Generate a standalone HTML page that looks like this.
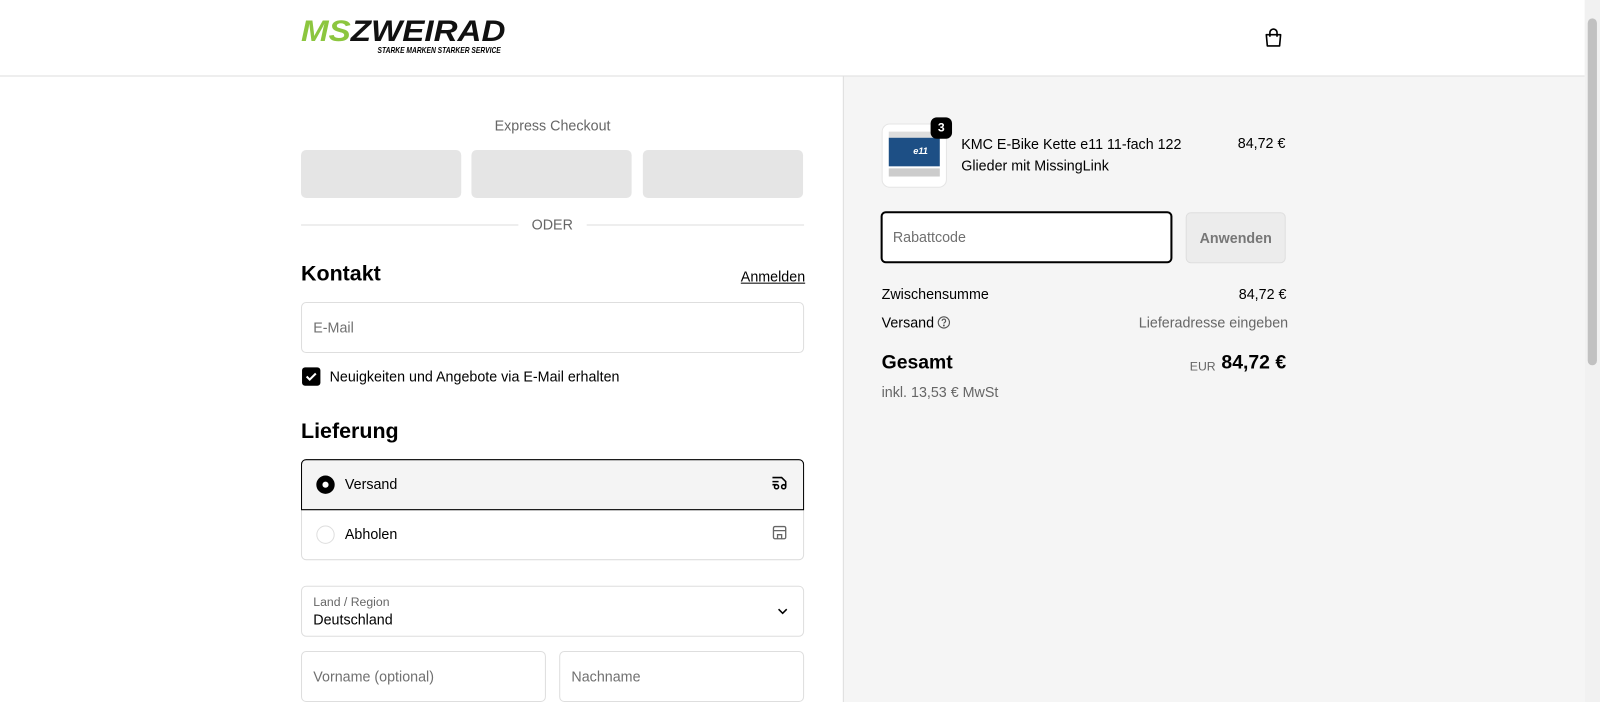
<!DOCTYPE html>
<html><head><meta charset="utf-8"><style>
*{box-sizing:border-box;margin:0;padding:0}
html,body{width:1600px;height:688px;overflow:hidden}
body{font-family:"Liberation Sans",Arial,sans-serif;color:#000;background:#fff;font-size:14px}
#w{position:absolute;left:0;top:0;width:1568px;height:674px;transform:scale(1.0204);transform-origin:0 0}
.abs{position:absolute}
.hdr{left:0;top:0;width:1553px;height:75px;border-bottom:1px solid #dedede;background:#fff}
.right{left:826px;top:75px;width:727px;height:613px;background:#f5f5f5;border-left:1px solid #dedede}
.sb{left:1553px;top:0;width:15px;height:688px;background:#f1f1f1}
.inp{border:1px solid #dedede;border-radius:5px;background:#fff}
.ph{color:#707070;font-size:14px}
.xb{background:#e5e5e5;border-radius:5px;height:47px;top:147px;width:157px}
</style></head><body><div id="w">
<div class="abs hdr"></div>
<div class="abs" style="left:295px;top:16px;font-style:italic;font-weight:900;font-size:29px;letter-spacing:0px;line-height:30px;transform:scaleX(1.12);transform-origin:0 0"><span style="color:#8cc63f">MS</span><span style="color:#111">ZWEIRAD</span></div>
<div class="abs" style="left:370px;top:45px;font-size:8px;font-weight:bold;font-style:italic;white-space:nowrap;transform:scaleX(0.82);transform-origin:0 0">STARKE MARKEN STARKER SERVICE</div>
<svg class="abs" style="left:1237px;top:26px" width="22" height="22" viewBox="0 0 22 22" fill="none" stroke="#000" stroke-width="1.6"><path d="M4 8h14l-1 11H5z" stroke-linejoin="round"/><path d="M7.5 10V6a3.5 3.5 0 0 1 7 0v4"/></svg>
<div class="abs right"></div>
<div class="abs sb"><div class="abs" style="left:3px;top:18px;width:9px;height:340px;background:#c1c1c1;border-radius:5px"></div></div>

<div class="abs" style="left:295px;top:115px;width:493px;text-align:center;color:#666">Express Checkout</div>
<div class="abs xb" style="left:295px"></div><div class="abs xb" style="left:462px"></div><div class="abs xb" style="left:630px"></div>
<div class="abs" style="left:295px;top:220px;width:213px;border-top:1px solid #dedede"></div>
<div class="abs" style="left:575px;top:220px;width:213px;border-top:1px solid #dedede"></div>
<div class="abs" style="left:521px;top:212px;color:#666">ODER</div>
<div class="abs" style="left:295px;top:257px;font-size:21px;font-weight:bold">Kontakt</div>
<div class="abs" style="left:726px;top:263px;text-decoration:underline">Anmelden</div>
<div class="abs inp" style="left:295px;top:296px;width:493px;height:50px"></div>
<div class="abs ph" style="left:307px;top:313px">E-Mail</div>
<div class="abs" style="left:296px;top:360px;width:18px;height:18px;background:#000;border-radius:3px"><svg width="18" height="18"><path d="M4.5 9l3 3 6-6" stroke="#fff" stroke-width="2" fill="none"/></svg></div>
<div class="abs" style="left:323px;top:361px">Neuigkeiten und Angebote via E-Mail erhalten</div>
<div class="abs" style="left:295px;top:411px;font-size:21px;font-weight:bold">Lieferung</div>
<div class="abs" style="left:295px;top:450px;width:493px;height:99px;border:1px solid #dedede;border-radius:5px"></div>
<div class="abs" style="left:295px;top:450px;width:493px;height:50px;border:1px solid #000;border-radius:5px 5px 0 0;background:#f4f4f4"></div>
<div class="abs" style="left:310px;top:466px;width:18px;height:18px;border-radius:50%;background:#000"><div class="abs" style="left:6px;top:6px;width:6px;height:6px;border-radius:50%;background:#fff"></div></div>
<div class="abs" style="left:338px;top:466px">Versand</div>
<svg class="abs" style="left:755px;top:464px" width="20" height="18" viewBox="0 0 20 18" fill="none" stroke="#000" stroke-width="1.5"><path d="M2 4h9l4 4v4h-1M2 8h6M2 11h4"/><circle cx="6" cy="13" r="2"/><circle cx="13" cy="13" r="2"/></svg>
<div class="abs" style="left:310px;top:515px;width:18px;height:18px;border-radius:50%;border:1px solid #dedede"></div>
<div class="abs" style="left:338px;top:515px">Abholen</div>
<svg class="abs" style="left:756px;top:514px" width="16" height="16" viewBox="0 0 16 16" fill="none" stroke="#666" stroke-width="1.3"><rect x="2" y="2" width="12" height="12" rx="1.5"/><path d="M2 6h12M6 14v-4h4v4"/></svg>
<div class="abs inp" style="left:295px;top:574px;width:493px;height:50px"></div>
<div class="abs" style="left:307px;top:583px;font-size:12px;color:#666">Land / Region</div>
<div class="abs" style="left:307px;top:599px">Deutschland</div>
<svg class="abs" style="left:761px;top:594px" width="12" height="10"><path d="M2 3l4 4 4-4" stroke="#000" stroke-width="1.5" fill="none"/></svg>
<div class="abs inp" style="left:295px;top:638px;width:240px;height:50px"></div>
<div class="abs ph" style="left:307px;top:655px">Vorname (optional)</div>
<div class="abs inp" style="left:548px;top:638px;width:240px;height:50px"></div>
<div class="abs ph" style="left:560px;top:655px">Nachname</div>

<div class="abs" style="left:864px;top:121px;width:64px;height:63px;background:#fff;border:1px solid #e5e5e5;border-radius:8px"><div class="abs" style="left:6px;top:7px;width:50px;height:6px;background:#ddd"></div><div class="abs" style="left:6px;top:13px;width:50px;height:28px;background:#1d4f85"></div><div class="abs" style="left:30px;top:21px;color:#fff;font-size:9px;font-weight:bold;font-style:italic">e11</div><div class="abs" style="left:6px;top:43px;width:50px;height:8px;background:#ccc"></div></div>
<div class="abs" style="left:912px;top:115px;width:21px;height:21px;background:#000;color:#fff;border-radius:6px;font-size:12px;font-weight:bold;text-align:center;line-height:21px">3</div>
<div class="abs" style="left:942px;top:131px;line-height:21px">KMC E-Bike Kette e11 11-fach 122<br>Glieder mit MissingLink</div>
<div class="abs" style="left:1213px;top:132px">84,72 €</div>
<div class="abs" style="left:863px;top:207px;width:286px;height:51px;border:2px solid #000;border-radius:5px;background:#fff"></div>
<div class="abs ph" style="left:875px;top:224px">Rabattcode</div>
<div class="abs" style="left:1162px;top:208px;width:98px;height:50px;border:1px solid #dedede;border-radius:5px;background:#ececec;color:#777;font-weight:bold;text-align:center;line-height:48px">Anwenden</div>
<div class="abs" style="left:864px;top:280px">Zwischensumme</div>
<div class="abs" style="left:1214px;top:280px">84,72 €</div>
<div class="abs" style="left:864px;top:308px">Versand</div>
<svg class="abs" style="left:918px;top:309px" width="14" height="14" viewBox="0 0 14 14" fill="none" stroke="#555" stroke-width="1.1"><circle cx="7" cy="7" r="5.5"/><path d="M5.3 5.5a1.7 1.7 0 1 1 2.4 1.5c-.5.3-.7.6-.7 1.2"/><circle cx="7" cy="10" r=".4" fill="#555"/></svg>
<div class="abs" style="left:1116px;top:308px;color:#666">Lieferadresse eingeben</div>
<div class="abs" style="left:864px;top:345px;font-size:19px;font-weight:bold">Gesamt</div>
<div class="abs" style="left:1166px;top:352px;font-size:12px;color:#666">EUR</div>
<div class="abs" style="left:1197px;top:345px;font-size:19px;font-weight:bold">84,72 €</div>
<div class="abs" style="left:864px;top:376px;color:#666">inkl. 13,53 € MwSt</div>
</div></body></html>
